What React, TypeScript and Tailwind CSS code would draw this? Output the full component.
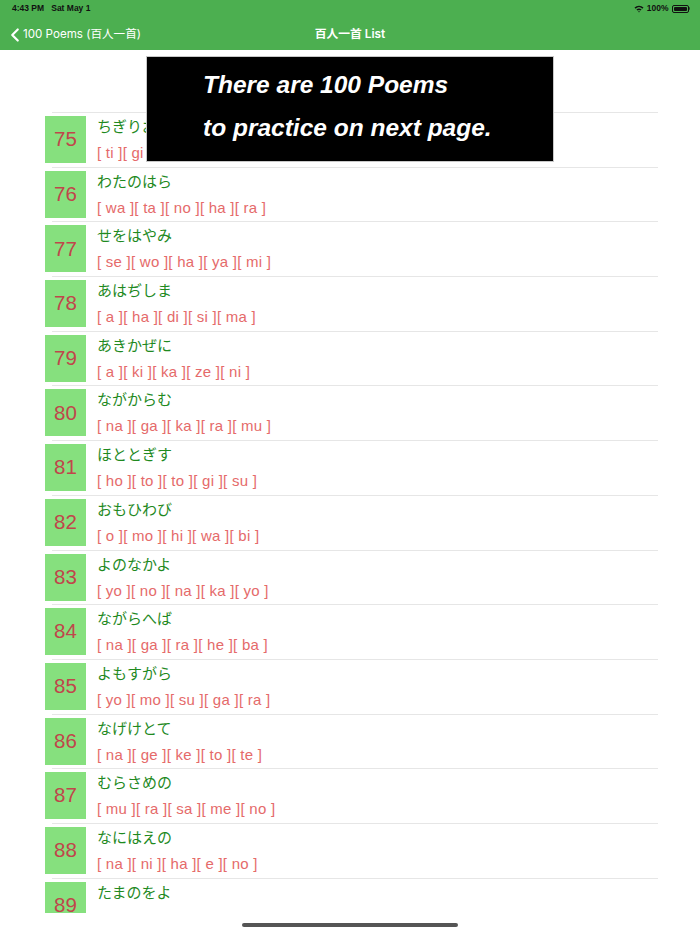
import { ChevronLeft } from "lucide-react";

const poems = [
  { n: 75, jp: "ちぎりおきし", ro: ["ti", "gi", "ri", "o", "ki", "si"] },
  { n: 76, jp: "わたのはら", ro: ["wa", "ta", "no", "ha", "ra"] },
  { n: 77, jp: "せをはやみ", ro: ["se", "wo", "ha", "ya", "mi"] },
  { n: 78, jp: "あはぢしま", ro: ["a", "ha", "di", "si", "ma"] },
  { n: 79, jp: "あきかぜに", ro: ["a", "ki", "ka", "ze", "ni"] },
  { n: 80, jp: "ながからむ", ro: ["na", "ga", "ka", "ra", "mu"] },
  { n: 81, jp: "ほととぎす", ro: ["ho", "to", "to", "gi", "su"] },
  { n: 82, jp: "おもひわび", ro: ["o", "mo", "hi", "wa", "bi"] },
  { n: 83, jp: "よのなかよ", ro: ["yo", "no", "na", "ka", "yo"] },
  { n: 84, jp: "ながらへば", ro: ["na", "ga", "ra", "he", "ba"] },
  { n: 85, jp: "よもすがら", ro: ["yo", "mo", "su", "ga", "ra"] },
  { n: 86, jp: "なげけとて", ro: ["na", "ge", "ke", "to", "te"] },
  { n: 87, jp: "むらさめの", ro: ["mu", "ra", "sa", "me", "no"] },
  { n: 88, jp: "なにはえの", ro: ["na", "ni", "ha", "e", "no"] },
  { n: 89, jp: "たまのをよ", ro: ["ta", "ma", "no", "wo", "yo"] }
];

function StatusBar() {
  return (
    <div className="flex items-center justify-between h-[17px] pl-[12px] pr-[10px] text-[8.5px] font-semibold text-[#111]">
      <span>4:43 PM&nbsp;&nbsp;&nbsp;Sat May 1</span>
      <div className="flex items-center gap-[3px]">
        <svg width="10" height="8" viewBox="0 0 10 8">
          <path d="M0.5 2.6 A6.5 6.5 0 0 1 9.5 2.6 L8.4 3.7 A5 5 0 0 0 1.6 3.7 Z" fill="#111" />
          <path d="M2.4 4.5 A4 4 0 0 1 7.6 4.5 L6.5 5.6 A2.5 2.5 0 0 0 3.5 5.6 Z" fill="#111" />
          <path d="M4.2 6.4 A1.2 1.2 0 0 1 5.8 6.4 L5 7.4 Z" fill="#111" />
        </svg>
        <span>100%</span>
        <div className="flex items-center">
          <div className="w-[17px] h-[8px] rounded-[2px] border border-[#111] p-[1px]">
            <div className="w-full h-full bg-[#111] rounded-[1px]" />
          </div>
          <div className="w-[1.5px] h-[3px] bg-[#111] opacity-60 rounded-r" />
        </div>
      </div>
    </div>
  );
}

function Row({ p }: { p: (typeof poems)[number] }) {
  return (
    <div className="relative h-[54.7px] shrink-0">
      <div className="ml-[7px] h-px bg-[#e6e6e6]" />
      <div className="flex mt-[3px]">
        <div className="w-[41px] h-[47px] bg-[#86e07e] flex items-center justify-center text-[20.5px] text-[#c0464b] shrink-0">
          {p.n}
        </div>
        <div className="ml-[11px] flex flex-col">
          <div className="text-[15px] leading-[20px] text-[#1f8a1f] font-['Noto_Sans_CJK_JP',sans-serif]">{p.jp}</div>
          <div className="mt-[7px] text-[15px] leading-[20px] tracking-[0.25px] text-[#e56a6a] whitespace-pre">
            {p.ro.map(r => `[ ${r} ]`).join("")}
          </div>
        </div>
      </div>
    </div>
  );
}

export default function App() {
  return (
    <div className="relative w-[700px] h-[934px] bg-white overflow-hidden font-['Liberation_Sans','Noto_Sans_CJK_JP',sans-serif]">
      <header className="bg-[#4caf50] h-[50px] flex flex-col">
        <StatusBar />
        <div className="relative flex items-center h-[33px] pt-[2px] text-white">
          <div className="flex items-center pl-[4px]">
            <ChevronLeft size={22} strokeWidth={2.4} />
            <span className="-ml-[3px] text-[11.6px] font-['Inter','Noto_Sans_CJK_JP',sans-serif]">100 Poems (百人一首)</span>
          </div>
          <div className="absolute inset-0 pt-[2px] flex items-center justify-center text-[11.8px] font-semibold font-['Inter','Noto_Sans_CJK_JP',sans-serif]">
            百人一首 List
          </div>
        </div>
      </header>
      <main className="h-[863px] overflow-hidden pt-[62px] pl-[45px] pr-[42px] flex flex-col">
        {poems.map(p => (
          <Row key={p.n} p={p} />
        ))}
      </main>
      <div className="h-[21px] flex justify-center pt-[10px]">
        <div className="w-[216px] h-[4px] rounded-full bg-[#555]" />
      </div>
      <div className="absolute left-[146px] top-[56px] w-[408px] h-[106px] bg-black border border-[#c8c8c8] pl-[56px] pt-[6px] text-white italic font-bold text-[24.5px] leading-[43px]">
        <div>There are 100 Poems</div>
        <div>to practice on next page.</div>
      </div>
    </div>
  );
}
